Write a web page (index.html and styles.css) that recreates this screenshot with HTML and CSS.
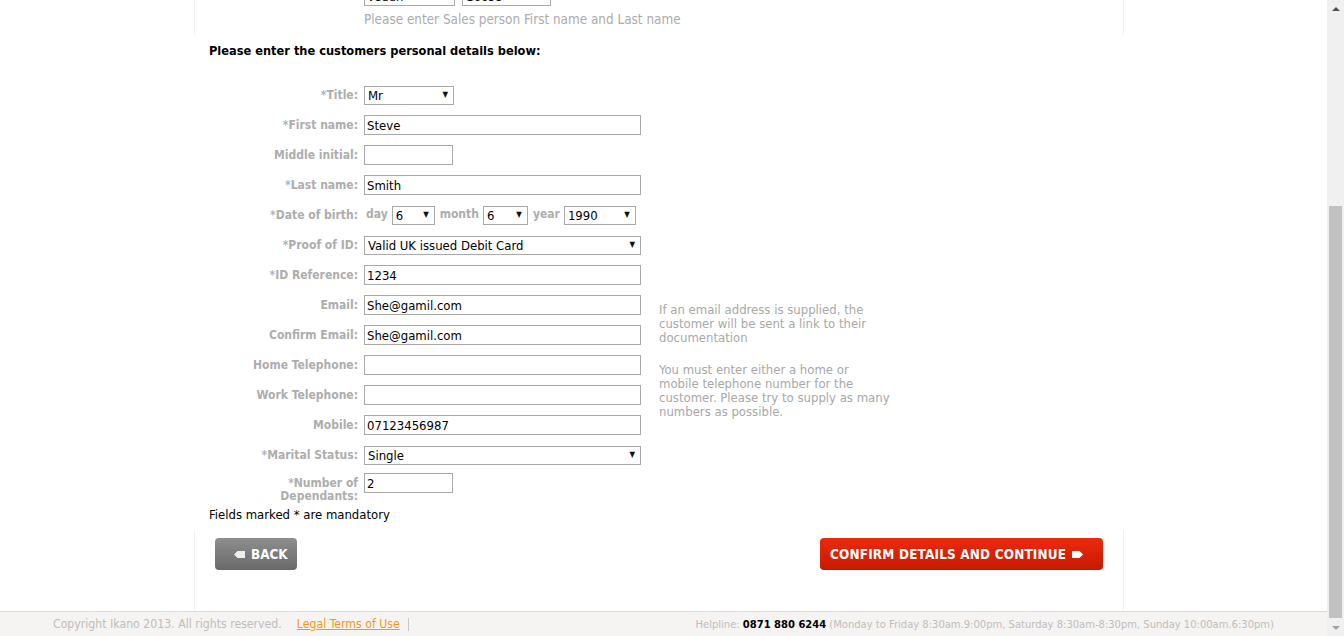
FILE: index.html
```html
<!DOCTYPE html>
<html lang="en">
<head>
<meta charset="utf-8">
<title>Customer details</title>
<link rel="stylesheet" href="styles.css">
</head>
<body>
<div class="window">
  <div class="viewport">
    <main class="page">
      <div class="wrap">
        <section class="sales-box">
          <div class="sales-inputs">
            <input class="inp inp-sales1" type="text" value="Vedun">
            <input class="inp inp-sales2" type="text" value="Goose">
          </div>
          <p class="sales-hint">Please enter Sales person First name and Last name</p>
        </section>

        <h2 class="heading">Please enter the customers personal details below:</h2>

        <form class="form">
          <label class="lbl"><span class="star">*</span>Title:</label>
          <div class="fld"><span class="sel sel-title"><select><option>Mr</option></select></span></div>

          <label class="lbl"><span class="star">*</span>First name:</label>
          <div class="fld"><input class="inp inp-wide" type="text" value="Steve"></div>

          <label class="lbl">Middle initial:</label>
          <div class="fld"><input class="inp inp-small" type="text" value=""></div>

          <label class="lbl"><span class="star">*</span>Last name:</label>
          <div class="fld"><input class="inp inp-wide" type="text" value="Smith"></div>

          <label class="lbl"><span class="star">*</span>Date of birth:</label>
          <div class="fld dob">
            <span class="dob-word">day</span>
            <span class="sel sel-day"><select><option>6</option></select></span>
            <span class="dob-word">month</span>
            <span class="sel sel-month"><select><option>6</option></select></span>
            <span class="dob-word">year</span>
            <span class="sel sel-year"><select><option>1990</option></select></span>
          </div>

          <label class="lbl"><span class="star">*</span>Proof of ID:</label>
          <div class="fld"><span class="sel sel-wide"><select><option>Valid UK issued Debit Card</option></select></span></div>

          <label class="lbl"><span class="star">*</span>ID Reference:</label>
          <div class="fld"><input class="inp inp-wide" type="text" value="1234"></div>

          <label class="lbl">Email:</label>
          <div class="fld"><input class="inp inp-wide" type="text" value="She@gamil.com"></div>

          <label class="lbl">Confirm Email:</label>
          <div class="fld"><input class="inp inp-wide" type="text" value="She@gamil.com"></div>

          <label class="lbl">Home Telephone:</label>
          <div class="fld"><input class="inp inp-wide" type="text" value=""></div>

          <label class="lbl">Work Telephone:</label>
          <div class="fld"><input class="inp inp-wide" type="text" value=""></div>

          <label class="lbl">Mobile:</label>
          <div class="fld"><input class="inp inp-wide" type="text" value="07123456987"></div>

          <label class="lbl"><span class="star">*</span>Marital Status:</label>
          <div class="fld"><span class="sel sel-wide"><select><option>Single</option></select></span></div>

          <label class="lbl lbl-two"><span class="star">*</span>Number of<br>Dependants:</label>
          <div class="fld fld-top"><input class="inp inp-small" type="text" value="2"></div>

          <p class="hint hint-email">If an email address is supplied, the customer will be sent a link to their documentation</p>
          <p class="hint hint-phone">You must enter either a home or<br>mobile telephone number for the customer. Please try to supply as many numbers as possible.</p>
        </form>

        <p class="mandatory">Fields marked * are mandatory</p>

        <div class="actions">
          <a class="btn btn-back" href="#">
            <svg class="tag" width="11" height="7" viewBox="0 0 11 7"><path d="M0 3.5 L3.5 0 H11 V7 H3.5 Z" fill="#eeeeee"/></svg>
            BACK
          </a>
          <a class="btn btn-confirm" href="#">
            CONFIRM DETAILS AND CONTINUE
            <svg class="tag" width="11" height="7" viewBox="0 0 11 7"><path d="M0 0 H7.5 L11 3.5 L7.5 7 H0 Z" fill="#ffffff"/></svg>
          </a>
        </div>
      </div>
    </main>
    <footer class="footer">
      <div class="foot-left">
        <span class="copy">Copyright Ikano 2013. All rights reserved.</span>
        <a class="legal" href="#">Legal Terms of Use</a>
        <span class="sep"></span>
      </div>
      <div class="foot-right">
        <span class="help-lbl">Helpline:</span>
        <b class="help-num">0871 880 6244</b>
        <span class="help-hours">(Monday to Friday 8:30am.9:00pm, Saturday 8:30am-8:30pm, Sunday 10:00am.6:30pm)</span>
      </div>
    </footer>
  </div>
  <div class="scrollbar">
    <div class="sb-up"></div>
    <div class="sb-track"><div class="sb-thumb"></div></div>
    <div class="sb-down"></div>
  </div>
</div>
</body>
</html>
```

FILE: styles.css
```css
* { box-sizing: border-box; }

html, body {
  margin: 0;
  padding: 0;
  height: 636px;
  overflow: hidden;
  background: #ffffff;
}

body {
  font-family: "DejaVu Sans Condensed", "DejaVu Sans", Verdana, sans-serif;
  font-stretch: condensed;
  font-size: 13px;
  color: #000;
}

.window {
  display: flex;
  height: 636px;
}

.viewport {
  flex: 1;
  display: flex;
  flex-direction: column;
  min-width: 0;
}

.page {
  flex: 1;
  overflow: hidden;
  display: flex;
  flex-direction: column;
}

.wrap {
  width: 930px;
  margin-left: 194px;
  flex: 1;
  display: flex;
  flex-direction: column;
}

/* top (scrolled) sales box */
.sales-box {
  margin-top: -14px;
  height: 49px;
  border-left: 1px solid #f1f1f1;
  border-right: 1px solid #f1f1f1;
  padding-left: 169px;
}

.sales-inputs {
  display: flex;
  gap: 7px;
  height: 20px;
}

.sales-hint {
  margin: 6px 0 0;
  line-height: 16px;
  color: #ababab;
  font-size: 13.4px;
}

.heading {
  margin: 8px 0 0 15px;
  font-size: 12.7px;
  line-height: 16px;
  font-weight: bold;
  color: #000;
}

/* form grid */
.form {
  margin: 21px 0 0;
  display: grid;
  grid-template-columns: 164px 277px 250px;
  grid-template-rows: repeat(14, 30px);
  column-gap: 6px;
}

.lbl {
  grid-column: 1;
  align-self: center;
  text-align: right;
  font-weight: bold;
  font-size: 12px;
  line-height: 13px;
  color: #adadad;
  padding-top: 1px;
}

.lbl-two {
  align-self: start;
  padding-top: 7px;
}

.star {
  color: #a7b6c4;
}

.fld {
  grid-column: 2;
  align-self: center;
  display: flex;
  align-items: center;
}

.fld-top {
  align-self: start;
  padding-top: 3px;
}

.inp {
  height: 20px;
  border: 1px solid #a9a9a9;
  padding: 0 2px;
  font: inherit;
  font-size: 13px;
  color: #000;
  background: #fff;
  outline: none;
}

.inp-wide { width: 277px; }
.inp-small { width: 89px; }
.inp-sales1 { width: 91px; }
.inp-sales2 { width: 89px; }

.sel {
  position: relative;
  display: inline-block;
  height: 19px;
}

.sel select {
  appearance: none;
  -webkit-appearance: none;
  width: 100%;
  height: 19px;
  border: 1px solid #a9a9a9;
  border-radius: 0;
  background: #fff;
  font: inherit;
  font-size: 13px;
  color: #000;
  padding: 0 0 0 3px;
  outline: none;
}

.sel::after {
  content: "\25BC";
  position: absolute;
  right: 6px;
  top: 4px;
  font-size: 8px;
  line-height: 10px;
  color: #111;
  pointer-events: none;
}

.sel-title { width: 90px; }
.sel-wide { width: 277px; }
.sel-day { width: 43px; }
.sel-month { width: 45px; }
.sel-year { width: 72px; }

.dob {
  gap: 0;
}

.dob-word {
  font-weight: bold;
  font-size: 12px;
  color: #adadad;
  margin: 0 4px 3px 2px;
}

.dob-word + .sel { margin-right: 3px; }

.hint {
  grid-column: 3;
  align-self: start;
  margin: 0;
  padding: 13px 0 0 12px;
  font-size: 13px;
  line-height: 14px;
  color: #a8a8a8;
}

.hint-email { grid-row: 8 / span 2; padding-right: 16px; }
.hint-phone { grid-row: 10 / span 4; }

.mandatory {
  margin: 7px 0 0 15px;
  font-size: 13px;
  line-height: 16px;
  color: #000;
}

/* actions */
.actions {
  margin-top: 7px;
  flex: 1;
  border-left: 1px solid #f1f1f1;
  border-right: 1px solid #f1f1f1;
  padding: 8px 20px 0;
  display: flex;
  justify-content: space-between;
  align-items: flex-start;
}

.btn {
  display: inline-flex;
  align-items: center;
  gap: 6px;
  height: 32px;
  border-radius: 4px;
  color: #fff;
  font-weight: bold;
  font-size: 13.4px;
  text-decoration: none;
}

.btn-back {
  width: 82px;
  padding-left: 19px;
  background: linear-gradient(#8e8e8e, #696969);
}

.btn-confirm {
  width: 283px;
  padding-left: 10px;
  letter-spacing: 0.2px;
  background: linear-gradient(#ec2a10, #c61a00);
}

/* footer */
.footer {
  height: 25px;
  flex: none;
  background: #f5f4f2;
  border-top: 1px solid #dedcda;
  display: flex;
  justify-content: space-between;
  align-items: center;
  padding: 0 53px;
}

.foot-left {
  display: flex;
  align-items: center;
  font-size: 12.2px;
  color: #c1bcbc;
}

.legal {
  margin-left: 15px;
  color: #f7941d;
  text-decoration: underline;
}

.sep {
  display: inline-block;
  width: 1px;
  height: 13px;
  background: #cbc5c5;
  margin-left: 8px;
}

.foot-right {
  font-size: 11.1px;
  color: #c1bcbc;
  white-space: nowrap;
}

.help-num {
  color: #000;
  font-weight: bold;
}

/* fake scrollbar */
.scrollbar {
  width: 17px;
  flex: none;
  background: #f0f0f0;
  display: flex;
  flex-direction: column;
}

.sb-up, .sb-down {
  height: 17px;
  flex: none;
  display: flex;
  align-items: center;
  justify-content: center;
}

.sb-up::before {
  content: "";
  border-left: 4px solid transparent;
  border-right: 4px solid transparent;
  border-bottom: 4px solid #505050;
}

.sb-down::before {
  content: "";
  border-left: 4px solid transparent;
  border-right: 4px solid transparent;
  border-top: 4px solid #a3a3a3;
}

.sb-track {
  flex: 1;
  display: flex;
  flex-direction: column;
  justify-content: flex-end;
  padding: 0 2px 1px;
}

.sb-thumb {
  height: 412px;
  background: #c1c1c1;
}
```
